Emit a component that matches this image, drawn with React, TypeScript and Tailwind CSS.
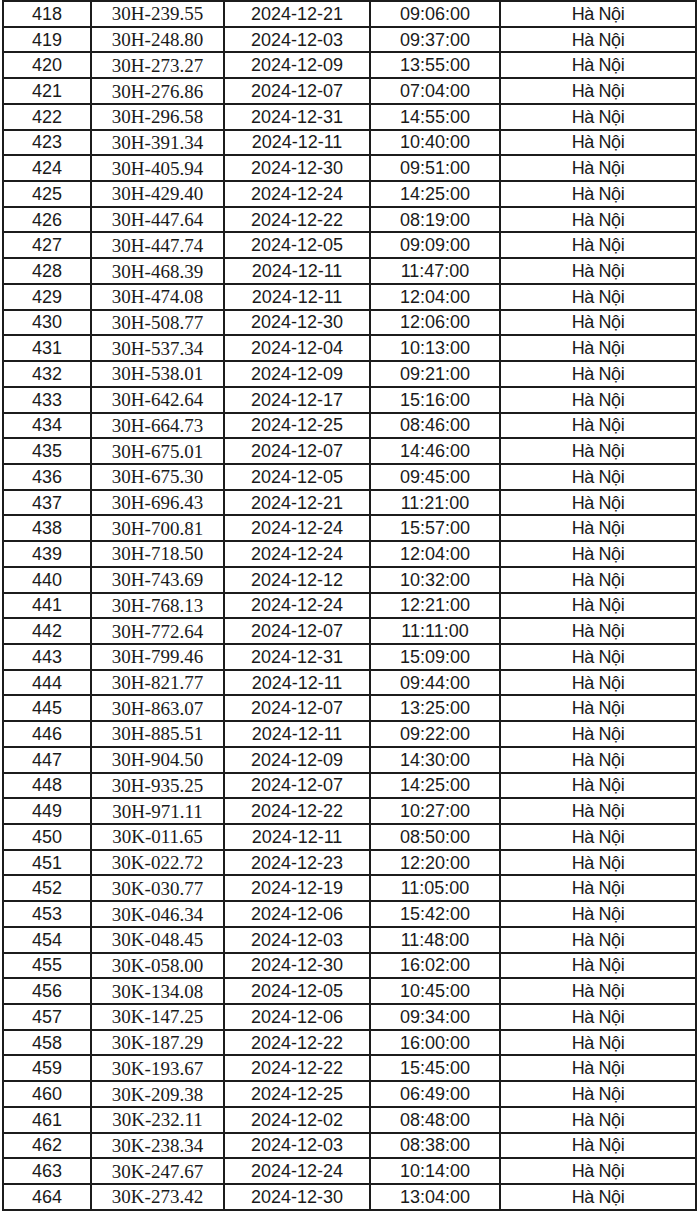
const rows: [number, string, string, string][] = [
  [418, "30H-239.55", "2024-12-21", "09:06:00"],
  [419, "30H-248.80", "2024-12-03", "09:37:00"],
  [420, "30H-273.27", "2024-12-09", "13:55:00"],
  [421, "30H-276.86", "2024-12-07", "07:04:00"],
  [422, "30H-296.58", "2024-12-31", "14:55:00"],
  [423, "30H-391.34", "2024-12-11", "10:40:00"],
  [424, "30H-405.94", "2024-12-30", "09:51:00"],
  [425, "30H-429.40", "2024-12-24", "14:25:00"],
  [426, "30H-447.64", "2024-12-22", "08:19:00"],
  [427, "30H-447.74", "2024-12-05", "09:09:00"],
  [428, "30H-468.39", "2024-12-11", "11:47:00"],
  [429, "30H-474.08", "2024-12-11", "12:04:00"],
  [430, "30H-508.77", "2024-12-30", "12:06:00"],
  [431, "30H-537.34", "2024-12-04", "10:13:00"],
  [432, "30H-538.01", "2024-12-09", "09:21:00"],
  [433, "30H-642.64", "2024-12-17", "15:16:00"],
  [434, "30H-664.73", "2024-12-25", "08:46:00"],
  [435, "30H-675.01", "2024-12-07", "14:46:00"],
  [436, "30H-675.30", "2024-12-05", "09:45:00"],
  [437, "30H-696.43", "2024-12-21", "11:21:00"],
  [438, "30H-700.81", "2024-12-24", "15:57:00"],
  [439, "30H-718.50", "2024-12-24", "12:04:00"],
  [440, "30H-743.69", "2024-12-12", "10:32:00"],
  [441, "30H-768.13", "2024-12-24", "12:21:00"],
  [442, "30H-772.64", "2024-12-07", "11:11:00"],
  [443, "30H-799.46", "2024-12-31", "15:09:00"],
  [444, "30H-821.77", "2024-12-11", "09:44:00"],
  [445, "30H-863.07", "2024-12-07", "13:25:00"],
  [446, "30H-885.51", "2024-12-11", "09:22:00"],
  [447, "30H-904.50", "2024-12-09", "14:30:00"],
  [448, "30H-935.25", "2024-12-07", "14:25:00"],
  [449, "30H-971.11", "2024-12-22", "10:27:00"],
  [450, "30K-011.65", "2024-12-11", "08:50:00"],
  [451, "30K-022.72", "2024-12-23", "12:20:00"],
  [452, "30K-030.77", "2024-12-19", "11:05:00"],
  [453, "30K-046.34", "2024-12-06", "15:42:00"],
  [454, "30K-048.45", "2024-12-03", "11:48:00"],
  [455, "30K-058.00", "2024-12-30", "16:02:00"],
  [456, "30K-134.08", "2024-12-05", "10:45:00"],
  [457, "30K-147.25", "2024-12-06", "09:34:00"],
  [458, "30K-187.29", "2024-12-22", "16:00:00"],
  [459, "30K-193.67", "2024-12-22", "15:45:00"],
  [460, "30K-209.38", "2024-12-25", "06:49:00"],
  [461, "30K-232.11", "2024-12-02", "08:48:00"],
  [462, "30K-238.34", "2024-12-03", "08:38:00"],
  [463, "30K-247.67", "2024-12-24", "10:14:00"],
  [464, "30K-273.42", "2024-12-30", "13:04:00"],
];

const cell = "flex items-center justify-center border-r-2 border-b-2 border-[#1c1c1c] h-[25.72px] leading-none";
const sans = "font-['Liberation_Sans',Arial,sans-serif] text-[18px]";
const serif = "font-['Liberation_Serif','Times_New_Roman',serif] text-[19px]";

export default function App() {
  return (
    <div className="w-[700px] h-[1214px] bg-white text-[#1a1a1a] overflow-hidden">
      <div className="ml-[2px] w-[695px] border-l-2 border-t-2 border-[#1c1c1c] grid grid-cols-[88px_133px_146px_130px_196px]">
        {rows.map(([n, plate, date, time]) => (
          <div key={n} className="contents">
            <div className={`${cell} ${sans}`}>{n}</div>
            <div className={`${cell} ${serif}`}>{plate}</div>
            <div className={`${cell} ${sans}`}>{date}</div>
            <div className={`${cell} ${sans}`}>{time}</div>
            <div className={`${cell} ${sans} tracking-[-0.4px]`}>Hà Nội</div>
          </div>
        ))}
      </div>
    </div>
  );
}
